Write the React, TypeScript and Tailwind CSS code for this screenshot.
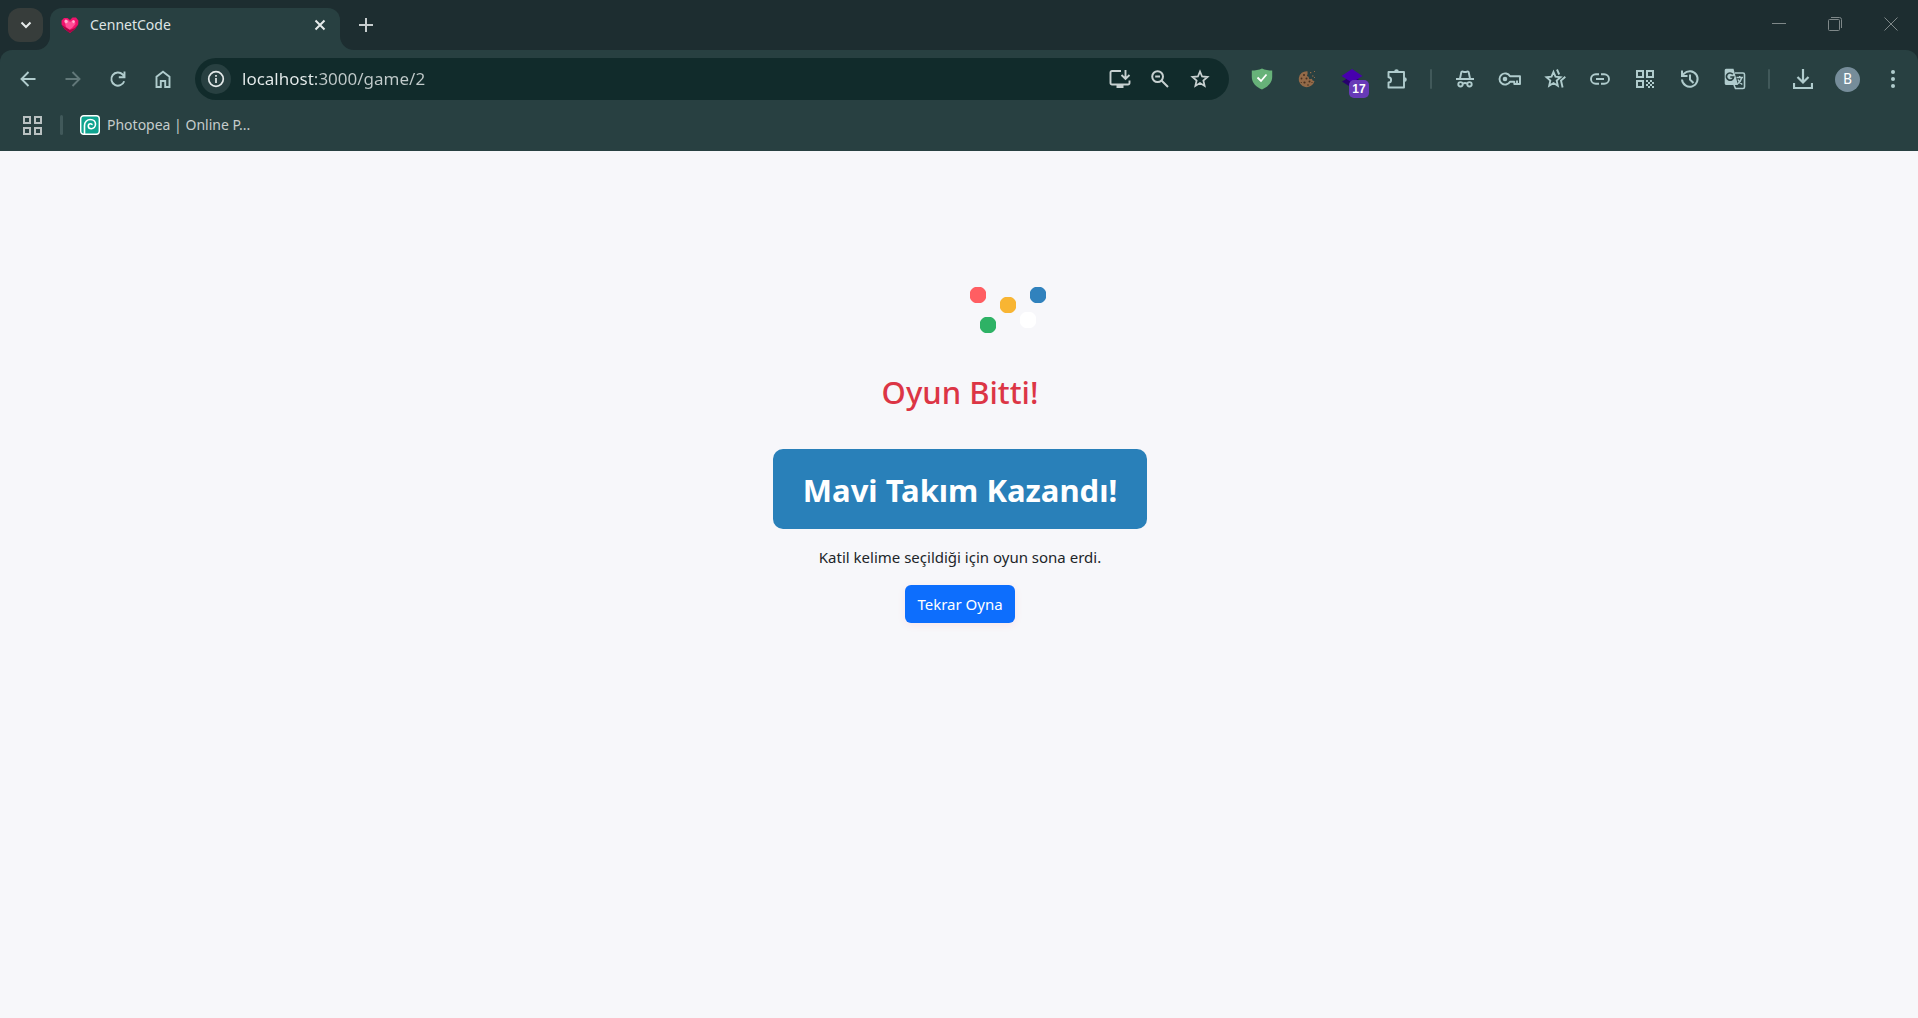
import type { ReactNode } from "react";

type IconProps = { children: ReactNode };

function NavIcon({ children }: IconProps) {
  return (
    <svg viewBox="0 0 18 18" fill="none" stroke="currentColor" strokeWidth="1.900" aria-hidden="true" className="size-[18px] shrink-0">
      {children}
    </svg>
  );
}

function ToolButton({ label, children, className = "" }: { label: string; children: ReactNode; className?: string }) {
  return (
    <button type="button" aria-label={label} className={`relative flex h-10 w-[45px] shrink-0 items-center justify-center ${className}`}>
      {children}
    </button>
  );
}

function Divider() {
  return (
    <div className="flex w-[23px] shrink-0 justify-center">
      <span className="h-5 w-0.5 rounded bg-[#41595a]" />
    </div>
  );
}

function HeartIcon() {
  return (
    <svg viewBox="0 0 18 17" className="h-[17px] w-[18px] shrink-0" aria-hidden="true">
      <path d="M9 16 3.500 12 .6 7.500.5 3.500 3 1h3.500L9 3l2.500-2.400H15l2.400 2.900-.2 4L14 12Z" fill="#f0126c" />
      <path d="M9 16 3.500 12 .6 7.500 4 10l5 3 5-2 3.300-4L14 12Z" fill="#a80544" />
      <path d="M4 6 3 4l1.500-2L7 3l2 2 3-2 2 1 .5 3L11 11 8.500 12.500 5 10Z" fill="#ff4f97" />
      <path d="M4 3h2l1 2-2 1.500L3.500 5ZM11 4l2-1 1 2-2 1.500Z" fill="#ffb1d0" />
    </svg>
  );
}

function TabStrip() {
  return (
    <header className="flex h-[50px] items-start bg-[#1d2d30]">
      <button type="button" aria-label="Search tabs" className="ml-2 mt-2 flex h-[34px] w-[35px] items-center justify-center rounded-xl bg-[#373d3b] text-[#e6ebeb]">
        <svg viewBox="0 0 12 8" className="h-2 w-3" fill="none" stroke="currentColor" strokeWidth="2" aria-hidden="true">
          <path d="m1.500 1.500 4.500 4.500 4.500-4.500" />
        </svg>
      </button>
      <div className="relative ml-[7px] mt-2 flex h-[42px] w-[290px] items-center rounded-t-xl bg-[#284041] pb-2 pl-[11px] pr-[14px]">
        <svg viewBox="0 0 14 14" className="absolute -left-3.5 bottom-0 size-3.5" aria-hidden="true">
          <path d="M14 0v14H0A14 14 0 0 0 14 0" fill="#284041" />
        </svg>
        <svg viewBox="0 0 14 14" className="absolute -right-3.5 bottom-0 size-3.5" aria-hidden="true">
          <path d="M0 0v14h14A14 14 0 0 1 0 0" fill="#284041" />
        </svg>
        <HeartIcon />
        <span className="ml-[11px] flex-1 text-sm leading-5 text-[#dfe5e5]">CennetCode</span>
        <button type="button" aria-label="Close tab" className="flex size-3 items-center justify-center text-[#e6ebeb]">
          <svg viewBox="0 0 12 12" className="size-3" stroke="currentColor" strokeWidth="2" aria-hidden="true">
            <path d="m1.500 1.500 9 9m0-9-9 9" />
          </svg>
        </button>
      </div>
      <button type="button" aria-label="New tab" className="ml-[19px] mt-[18px] text-[#c7cdce]">
        <svg viewBox="0 0 14 14" className="size-3.5" stroke="currentColor" strokeWidth="2" aria-hidden="true">
          <path d="M7 0v14M0 7h14" />
        </svg>
      </button>
      <div className="ml-auto flex h-12 items-center text-[#7f8889]">
        <button type="button" aria-label="Minimize" className="flex w-14 justify-center">
          <svg viewBox="0 0 14 14" className="size-3.5" stroke="currentColor" aria-hidden="true"><path d="M0 6.500h14" /></svg>
        </button>
        <button type="button" aria-label="Restore" className="flex w-14 justify-center">
          <svg viewBox="0 0 14 14" className="size-3.5" fill="none" stroke="currentColor" aria-hidden="true">
            <rect x=".5" y="2.500" width="11" height="11" rx="1" />
            <path d="M3 .5h8.500a2 2 0 0 1 2 2V11" />
          </svg>
        </button>
        <button type="button" aria-label="Close" className="flex w-[55px] justify-center">
          <svg viewBox="0 0 14 14" className="size-3.5" stroke="currentColor" aria-hidden="true"><path d="m.5.5 13 13m0-13-13 13" /></svg>
        </button>
      </div>
    </header>
  );
}

function AddressBar() {
  return (
    <div className="mx-2.5 flex h-[42px] flex-1 items-center rounded-full bg-[#112b2b] pl-1.5 pr-[18px] text-[#c7d0d0]">
      <button type="button" aria-label="Site information" className="flex size-[30px] items-center justify-center rounded-full bg-[#284041] text-[#e3e9e9]">
        <svg viewBox="0 0 18 18" className="size-[18px]" fill="none" stroke="currentColor" aria-hidden="true">
          <circle cx="9" cy="9" r="7.300" strokeWidth="1.700" />
          <path d="M9 8v5M9 5v1.700" strokeWidth="1.700" />
        </svg>
      </button>
      <input
        id="address"
        aria-label="Address"
        defaultValue="localhost:3000/game/2"
        className="ml-[11px] h-8 min-w-0 flex-1 bg-[linear-gradient(90deg,#e8eeee_72px,#c2cbcb_73px)] bg-clip-text text-[17px] leading-8 text-transparent outline-none"
      />
      <div className="flex items-center gap-[18px]">
        <button type="button" aria-label="Install app">
          <svg viewBox="0 0 22 20" className="h-5 w-[22px]" fill="none" stroke="currentColor" strokeWidth="1.900" aria-hidden="true">
            <path d="M12 2H3a1.500 1.500 0 0 0-1.500 1.500V14A1.500 1.500 0 0 0 3 15.500h16a1.500 1.500 0 0 0 1.500-1.500v-2.500M16.500 1v8M12.500 6l4 4 4-4" />
            <path d="M7.500 15h7v4h-7z" fill="currentColor" stroke="none" />
          </svg>
        </button>
        <button type="button" aria-label="Zoom" className="flex w-[22px] justify-center">
          <svg viewBox="0 0 18 18" className="size-[18px]" fill="none" stroke="currentColor" strokeWidth="2" aria-hidden="true">
            <circle cx="6.600" cy="6.600" r="5.400" />
            <path d="m10.500 10.500 6.500 6.500M4.200 6.600H9" />
          </svg>
        </button>
        <button type="button" aria-label="Bookmark this tab" className="flex w-[22px] justify-center">
          <svg viewBox="0 0 20 20" className="size-5" fill="none" stroke="currentColor" strokeWidth="1.800" aria-hidden="true">
            <path d="m10 2.500 2.100 5 5.400.5-4.100 3.600 1.200 5.300-4.600-2.800-4.600 2.800 1.200-5.300L2.500 8l5.400-.5Z" />
          </svg>
        </button>
      </div>
    </div>
  );
}

function Extensions() {
  return (
    <>
      <ToolButton label="Ad blocker">
        <svg viewBox="0 0 22 22" className="size-[22px]" aria-hidden="true">
          <path d="M11 .5C8 2 4 2.500.8 2.500V9c0 5.500 4.200 10 10.200 12.500C17 19 21.200 14.500 21.200 9V2.500C18 2.500 14 2 11 .5Z" fill="#67b279" />
          <path d="m6.500 9.500 3.500 3.500 5.500-6.500" fill="none" stroke="#fff" strokeWidth="1.800" />
        </svg>
      </ToolButton>
      <ToolButton label="Cookie editor">
        <svg viewBox="0 0 20 20" className="size-5" aria-hidden="true">
          <path d="M10.500 2.200a8 8 0 1 0 7 9.800l-1.700-.2-1-2-2.500.5-.8-2.500-1.700-.8.800-2Z" fill="#936a48" />
          <path d="M13 3h1.300v1.300H13zM17 2h1v1h-1zM15 6.500h1.500v1H15zM17 8h1v1h-1z" fill="#936a48" />
          <g fill="#46301f">
            <circle cx="7" cy="6" r="1" /><circle cx="4.500" cy="9.500" r=".9" /><circle cx="9.500" cy="9.500" r="1" />
            <circle cx="7.500" cy="13.500" r="1.100" /><circle cx="12.500" cy="12.500" r="1" /><circle cx="11" cy="16" r=".8" />
            <circle cx="4.300" cy="13.500" r=".6" /><circle cx="15" cy="13.500" r=".6" />
          </g>
        </svg>
      </ToolButton>
      <ToolButton label="Layers, 17 notifications">
        <svg viewBox="0 0 22 20" className="h-5 w-[22px]" aria-hidden="true">
          <path d="m11 6.500 10 6-10 6.500-10-6.500Z" fill="#27006d" />
          <path d="m11 0 10.500 7L11 13.500.5 7Z" fill="#4700ad" />
        </svg>
        <span className="absolute bottom-px right-[5px] flex h-[18px] w-5 items-center justify-center rounded-[5px] bg-[#673ab7] font-['Liberation_Sans'] text-xs font-bold leading-4 text-white">17</span>
      </ToolButton>
      <ToolButton label="Extensions">
        <svg viewBox="0 0 22 22" className="size-[22px]" fill="none" stroke="currentColor" strokeWidth="1.900" aria-hidden="true">
          <path d="M2.500 4H18v15.500H2.500v-5a2.600 2.600 0 0 0 0-5.200Z" strokeLinejoin="round" />
          <path d="M8.200 3.500a2.300 2.300 0 0 1 4.600 0ZM18.500 9.300a2.300 2.300 0 0 1 0 4.600Z" fill="currentColor" stroke="none" />
        </svg>
      </ToolButton>
    </>
  );
}

function Shortcuts() {
  return (
    <>
      <ToolButton label="New Incognito window">
        <svg viewBox="0 0 18 18" className="size-[18px]" fill="none" stroke="currentColor" strokeWidth="1.900" aria-hidden="true">
          <path d="M0 9h18M4 8.500 5.300 2.300c.2-.8.800-1 1.600-.7 1.400.6 2.800.6 4.200 0 .8-.3 1.400-.1 1.600.7L14 8.500" />
          <circle cx="4.500" cy="14.300" r="2.200" /><circle cx="13.500" cy="14.300" r="2.200" />
          <path d="M6.800 13.800c1.200-.9 3.200-.9 4.400 0" />
        </svg>
      </ToolButton>
      <ToolButton label="Passwords">
        <svg viewBox="0 0 24 16" className="h-4 w-6" fill="none" stroke="currentColor" strokeWidth="1.900" aria-hidden="true">
          <path d="M12 5.300A5.600 5.600 0 1 0 12 10.700h4.300V13h5.700V5.300Z" strokeLinejoin="round" />
          <circle cx="7" cy="8" r="2.300" fill="currentColor" stroke="none" />
          <path d="M19 9.500V13" />
        </svg>
      </ToolButton>
      <ToolButton label="Bookmarks">
        <svg viewBox="0 0 22 20" className="h-5 w-[22px]" fill="none" stroke="currentColor" strokeWidth="1.900" aria-hidden="true">
          <path d="m9.500 3 2 4.700 5 .5-3.800 3.400 1.100 5.100-4.300-2.700-4.300 2.700 1.100-5.100-3.800-3.400 5-.5Z" />
          <path d="m13 .5 2.200 5M21.300 7.700l-4.300 3.800 1.600 7" />
        </svg>
      </ToolButton>
      <ToolButton label="Copy link">
        <svg viewBox="0 0 20 12" className="h-3 w-5" fill="none" stroke="currentColor" strokeWidth="1.900" aria-hidden="true">
          <path d="M9 1.200H5.800a4.800 4.800 0 0 0 0 9.600H9M11 1.200h3.200a4.800 4.800 0 0 1 0 9.600H11M6 6h8" />
        </svg>
      </ToolButton>
      <ToolButton label="Create QR code">
        <svg viewBox="0 0 18 18" className="size-[18px]" fill="none" stroke="currentColor" strokeWidth="2" aria-hidden="true">
          <path d="M1 1h6v6H1zM11 1h6v6h-6zM1 11h6v6H1z" />
          <path d="M10 10h2v2h-2zM14 10h2v2h-2zM12 12h2v2h-2zM16 12h2v2h-2zM10 14h2v2h-2zM14 14h2v2h-2zM12 16h2v2h-2zM16 16h2v2h-2z" fill="currentColor" stroke="none" />
        </svg>
      </ToolButton>
      <ToolButton label="History">
        <svg viewBox="0 0 20 20" className="size-5" fill="none" stroke="currentColor" strokeWidth="2" aria-hidden="true">
          <path d="M2 10.500a7.800 7.800 0 1 0 2-5.800L2 7M2 1.500v5.500h5.500M10 5.500V10.500l3.500 3.500" />
        </svg>
      </ToolButton>
      <ToolButton label="Translate">
        <svg viewBox="0 0 22 22" className="size-[22px]" fill="none" stroke="currentColor" aria-hidden="true">
          <path d="M11 5h8a1.500 1.500 0 0 1 1.500 1.500V19a1.500 1.500 0 0 1-1.500 1.500h-7.500L10 17" strokeWidth="1.600" />
          <path d="M2 .7h7.500L14 17H2A1.500 1.500 0 0 1 .7 15.500V2.200A1.500 1.500 0 0 1 2 .7Z" fill="currentColor" stroke="none" />
          <path d="M8.800 6.300A3.600 3.600 0 1 0 9.600 9H6.300" stroke="#284041" strokeWidth="1.700" />
          <path d="M12.500 9.500h6.500M15.700 8v1.500M17.800 9.500c-.6 2.700-2.300 5-4.300 6.500M14 11.500c.8 2 2.500 3.800 4.300 5" strokeWidth="1.500" />
        </svg>
      </ToolButton>
    </>
  );
}

function Toolbar() {
  return (
    <nav aria-label="Browser toolbar" className="flex h-[58px] items-center pl-[5px] pr-[3px] text-[#b0cccd]">
      <ToolButton label="Back">
        <NavIcon><path d="M16.500 9H3M9.500 2 2.500 9l7 7" /></NavIcon>
      </ToolButton>
      <ToolButton label="Forward" className="text-[#627879]">
        <NavIcon><path d="M1.500 9H15M8.500 2l7 7-7 7" /></NavIcon>
      </ToolButton>
      <ToolButton label="Reload">
        <NavIcon><path d="M15.200 11.200A6.600 6.600 0 1 1 13.700 4.500L15.500 6.500M15.500 1.500v5.800H9.800" /></NavIcon>
      </ToolButton>
      <ToolButton label="Home">
        <NavIcon><path d="M2.500 17V6.700L9 1.700l6.500 5V17H11.200v-6H6.800v6Z" /></NavIcon>
      </ToolButton>
      <AddressBar />
      <Extensions />
      <Divider />
      <Shortcuts />
      <Divider />
      <ToolButton label="Downloads">
        <svg viewBox="0 0 20 20" className="size-5" fill="none" stroke="currentColor" strokeWidth="2.200" aria-hidden="true">
          <path d="M10 0v13M4.500 8l5.500 5.500L15.500 8M1 14v5h18v-5" />
        </svg>
      </ToolButton>
      <ToolButton label="Profile">
        <span className="flex size-[25px] items-center justify-center rounded-full bg-[#768d9a] font-[Roboto] text-sm leading-4 text-white">B</span>
      </ToolButton>
      <ToolButton label="Menu">
        <svg viewBox="0 0 4 18" className="h-[18px] w-1" fill="currentColor" aria-hidden="true">
          <circle cx="2" cy="2" r="2" /><circle cx="2" cy="9" r="2" /><circle cx="2" cy="16" r="2" />
        </svg>
      </ToolButton>
    </nav>
  );
}

function BookmarksBar() {
  return (
    <nav aria-label="Bookmarks" className="flex h-[43px] items-center pb-[9px] pl-[23px] text-[#b9c1c1]">
      <button type="button" aria-label="Tab groups">
        <svg viewBox="0 0 19 19" className="size-[19px]" fill="none" stroke="currentColor" strokeWidth="2" aria-hidden="true">
          <path d="M1 1h6v6H1zM12 1h6v6h-6zM1 12h6v6H1zM12 12h6v6h-6z" />
        </svg>
      </button>
      <span className="ml-[18px] mr-[17px] h-5 w-[3px] rounded bg-[#41595a]" />
      <a href="https://www.photopea.com" className="flex items-center gap-[7px]">
        <svg viewBox="0 0 20 20" className="size-5" aria-hidden="true">
          <rect x=".7" y=".7" width="18.600" height="18.600" rx="3" fill="#0fa38f" stroke="#fff" strokeWidth="1.400" />
          <path d="M4.500 19V10.500A5.800 5.800 0 0 1 10.500 4.500c3 0 5 2 5 4.600 0 2.800-2 4.600-4.200 4.600-1.800 0-3-1.200-3-2.700 0-1.300 1-2.300 2.200-2.300 1 0 1.600.6 1.500 1.500" fill="none" stroke="#fff" strokeWidth="1.600" />
        </svg>
        <span className="text-sm leading-5 text-[#c5cccc]">Photopea | Online P...</span>
      </a>
    </nav>
  );
}

function Confetti() {
  const dots = [
    { x: 96, y: 0, fill: "#ff5e62" },
    { x: 126, y: 10, fill: "#f8b533" },
    { x: 156, y: 0, fill: "#3182bd" },
    { x: 106, y: 30, fill: "#2eb265" },
    { x: 146, y: 25, fill: "#ffffff" },
  ];
  return (
    <svg viewBox="0 0 172 46" className="h-[46px] w-[172px]" aria-hidden="true">
      {dots.map((d) => (
        <path
          key={d.fill}
          transform={`translate(${d.x} ${d.y})`}
          d="M5 0h6l2 1 2 2 1 2v6l-1 2-2 2-2 1H5l-2-1-2-2-1-2V5l1-2 2-2Z"
          fill={d.fill}
        />
      ))}
    </svg>
  );
}

export default function App() {
  return (
    <div className="flex min-h-screen flex-col bg-[#f7f7fa] font-['Noto_Sans',sans-serif]">
      <TabStrip />
      <div className="bg-[#1d2d30]">
        <div className="rounded-t-xl bg-[#284041]">
          <Toolbar />
          <BookmarksBar />
        </div>
      </div>
      <main className="flex flex-1 flex-col items-center pl-0.5 pt-[136px] text-[#212529]">
        <Confetti />
        <h1 className="mt-10 text-[31px] font-medium leading-[38px] text-[#dc3545]">Oyun Bitti!</h1>
        <div className="mt-[38px] rounded-[10px] bg-[#2980b9] px-[30px] pb-[19px] pt-[21px] text-[31px] font-bold leading-10 text-white">
          Mavi Takım Kazandı!
        </div>
        <p className="mt-4 text-[15px] leading-6">Katil kelime seçildiği için oyun sona erdi.</p>
        <button type="button" className="mt-4 rounded-md bg-[#0d6efd] px-3 py-[7px] text-[15px] leading-6 text-white shadow-[0_2px_8px_rgba(255,0,80,0.08)]">
          Tekrar Oyna
        </button>
      </main>
    </div>
  );
}
